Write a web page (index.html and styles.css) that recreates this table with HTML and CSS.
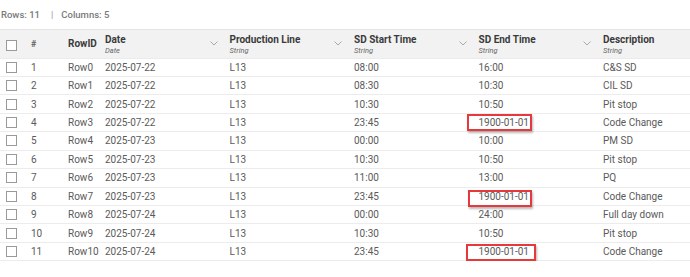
FILE: index.html
```html
<!DOCTYPE html>
<html>
<head>
<meta charset="utf-8">
<link rel="stylesheet" href="styles.css">
</head>
<body>
<div class="info"><span>Rows: 11</span><span class="sep">|</span><span>Columns: 5</span></div>
<div class="grid">
  <div class="row head">
    <div class="cell cb"><span class="box"></span></div>
    <div class="cell num">#</div>
    <div class="cell rid">RowID</div>
    <div class="cell col"><div class="ttl"><b>Date</b><i>Date</i></div><svg class="chev" viewBox="0 0 8 5"><path d="M0.5 0.5 L4 4 L7.5 0.5" /></svg></div>
    <div class="cell col"><div class="ttl"><b>Production Line</b><i>String</i></div><svg class="chev" viewBox="0 0 8 5"><path d="M0.5 0.5 L4 4 L7.5 0.5" /></svg></div>
    <div class="cell col"><div class="ttl"><b>SD Start Time</b><i>String</i></div><svg class="chev" viewBox="0 0 8 5"><path d="M0.5 0.5 L4 4 L7.5 0.5" /></svg></div>
    <div class="cell col"><div class="ttl"><b>SD End Time</b><i>String</i></div><svg class="chev" viewBox="0 0 8 5"><path d="M0.5 0.5 L4 4 L7.5 0.5" /></svg></div>
    <div class="cell col last"><div class="ttl"><b>Description</b><i>String</i></div></div>
  </div>
  <div class="row"><div class="cell cb"><span class="box"></span></div><div class="cell num">1</div><div class="cell rid">Row0</div><div class="cell">2025-07-22</div><div class="cell">L13</div><div class="cell">08:00</div><div class="cell">16:00</div><div class="cell">C&amp;S SD</div></div>
  <div class="row"><div class="cell cb"><span class="box"></span></div><div class="cell num">2</div><div class="cell rid">Row1</div><div class="cell">2025-07-22</div><div class="cell">L13</div><div class="cell">08:30</div><div class="cell">10:30</div><div class="cell">CIL SD</div></div>
  <div class="row"><div class="cell cb"><span class="box"></span></div><div class="cell num">3</div><div class="cell rid">Row2</div><div class="cell">2025-07-22</div><div class="cell">L13</div><div class="cell">10:30</div><div class="cell">10:50</div><div class="cell">Pit stop</div></div>
  <div class="row"><div class="cell cb"><span class="box"></span></div><div class="cell num">4</div><div class="cell rid">Row3</div><div class="cell">2025-07-22</div><div class="cell">L13</div><div class="cell">23:45</div><div class="cell mk">1900-01-01<span class="mark m1"></span></div><div class="cell">Code Change</div></div>
  <div class="row"><div class="cell cb"><span class="box"></span></div><div class="cell num">5</div><div class="cell rid">Row4</div><div class="cell">2025-07-23</div><div class="cell">L13</div><div class="cell">00:00</div><div class="cell">10:00</div><div class="cell">PM SD</div></div>
  <div class="row"><div class="cell cb"><span class="box"></span></div><div class="cell num">6</div><div class="cell rid">Row5</div><div class="cell">2025-07-23</div><div class="cell">L13</div><div class="cell">10:30</div><div class="cell">10:50</div><div class="cell">Pit stop</div></div>
  <div class="row"><div class="cell cb"><span class="box"></span></div><div class="cell num">7</div><div class="cell rid">Row6</div><div class="cell">2025-07-23</div><div class="cell">L13</div><div class="cell">11:00</div><div class="cell">13:00</div><div class="cell">PQ</div></div>
  <div class="row"><div class="cell cb"><span class="box"></span></div><div class="cell num">8</div><div class="cell rid">Row7</div><div class="cell">2025-07-23</div><div class="cell">L13</div><div class="cell">23:45</div><div class="cell mk">1900-01-01<span class="mark m2"></span></div><div class="cell">Code Change</div></div>
  <div class="row"><div class="cell cb"><span class="box"></span></div><div class="cell num">9</div><div class="cell rid">Row8</div><div class="cell">2025-07-24</div><div class="cell">L13</div><div class="cell">00:00</div><div class="cell">24:00</div><div class="cell">Full day down</div></div>
  <div class="row"><div class="cell cb"><span class="box"></span></div><div class="cell num">10</div><div class="cell rid">Row9</div><div class="cell">2025-07-24</div><div class="cell">L13</div><div class="cell">10:30</div><div class="cell">10:50</div><div class="cell">Pit stop</div></div>
  <div class="row"><div class="cell cb"><span class="box"></span></div><div class="cell num">11</div><div class="cell rid">Row10</div><div class="cell">2025-07-24</div><div class="cell">L13</div><div class="cell">23:45</div><div class="cell mk">1900-01-01<span class="mark m3"></span></div><div class="cell">Code Change</div></div>
</div>
</body>
</html>
```
FILE: styles.css
```css
html, body {
  margin: 0;
  padding: 0;
  background: #fff;
  font-family: Roboto, "Liberation Sans", sans-serif;
}
.info {
  height: 29px;
  display: flex;
  align-items: center;
  padding-left: 1px;
  font-size: 9.5px;
  font-weight: 500;
  color: #7a7a7a;
}
.info .sep {
  margin: 0 8px 0 11px;
  color: #999;
  font-weight: 400;
}
.grid {
  display: flex;
  flex-direction: column;
}
.row {
  display: grid;
  grid-template-columns: 26px 37px 37px 124.5px 124.5px 124.5px 124.5px 92px;
  height: 18.45px;
  box-sizing: border-box;
  border-bottom: 1px solid #ececec;
  font-size: 10px;
  color: #5a5a5a;
}
.row.head {
  height: 29.5px;
  background: #f2f2f2;
  border-top: 1px solid #e4e4e4;
  border-bottom: 1px solid #ebebeb;
  color: #3a3a3a;
}
.cell {
  display: flex;
  align-items: center;
  padding-left: 5px;
  white-space: nowrap;
  position: relative;
}
.cell.cb {
  padding-left: 6px;
}
.box {
  width: 9px;
  height: 9px;
  border: 1px solid #9a9a9a;
  background: #fff;
}
.head .box {
  margin-top: 3px;
}
.head .num {
  font-weight: 700;
  font-size: 9px;
  color: #666;
}
.head .rid {
  font-weight: 700;
  font-size: 10px;
  color: #3a3a3a;
}
.head .col {
  justify-content: space-between;
  padding-right: 7px;
}
.ttl {
  display: flex;
  flex-direction: column;
  line-height: 1;
  margin-top: 1px;
}
.ttl b {
  font-size: 10px;
  font-weight: 700;
  color: #3a3a3a;
}
.ttl i {
  margin-top: 2px;
  font-size: 7.5px;
  color: #666;
}
.chev {
  width: 8px;
  height: 5px;
  fill: none;
  stroke: #a0a0a0;
  stroke-width: 0.9;
}
.mark {
  position: absolute;
  border: 2px solid #e5393b;
  box-sizing: border-box;
  box-shadow: 1px 1.5px 2px rgba(0, 0, 0, 0.28);
}
.m1 { left: -7px; top: 0; width: 65px; height: 17px; }
.m2 { left: -6px; top: 2.5px; width: 64px; height: 16.5px; }
.m3 { left: -8px; top: 1.5px; width: 70px; height: 17px; }
```
